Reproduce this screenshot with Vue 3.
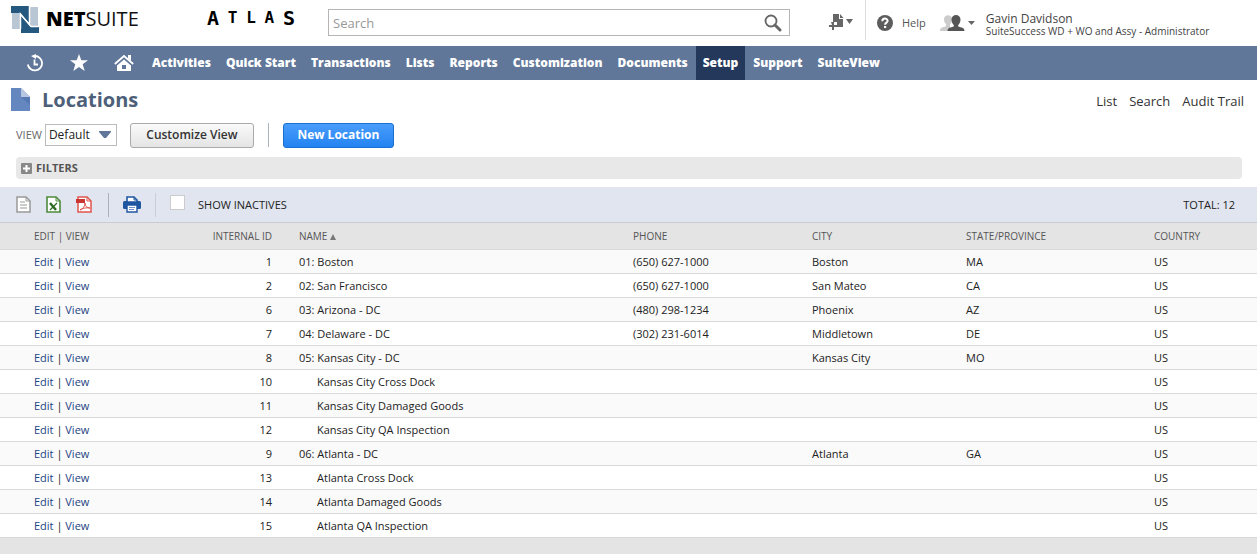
<script setup>
import { ref } from 'vue'

const query = ref('')
const view = ref('Default')
const showInactives = ref(false)
const atlas = ['A', 'T', 'L', 'A', 'S']
const menu = ['Activities', 'Quick Start', 'Transactions', 'Lists', 'Reports', 'Customization', 'Documents', 'Setup', 'Support', 'SuiteView']

const make = (id, name, child = false, phone = '', city = '', state = '') => ({ id, name, child, phone, city, state })
const rows = [
  make(1, '01: Boston', false, '(650) 627-1000', 'Boston', 'MA'),
  make(2, '02: San Francisco', false, '(650) 627-1000', 'San Mateo', 'CA'),
  make(6, '03: Arizona - DC', false, '(480) 298-1234', 'Phoenix', 'AZ'),
  make(7, '04: Delaware - DC', false, '(302) 231-6014', 'Middletown', 'DE'),
  make(8, '05: Kansas City - DC', false, '', 'Kansas City', 'MO'),
  make(10, 'Kansas City Cross Dock', true),
  make(11, 'Kansas City Damaged Goods', true),
  make(12, 'Kansas City QA Inspection', true),
  make(9, '06: Atlanta - DC', false, '', 'Atlanta', 'GA'),
  make(13, 'Atlanta Cross Dock', true),
  make(14, 'Atlanta Damaged Goods', true),
  make(15, 'Atlanta QA Inspection', true)
]
</script>

<template>
  <div class="page">
    <header class="top">
      <div class="brand">
        <svg class="mark" width="28" height="28" viewBox="0 0 28 28" aria-hidden="true">
          <path d="M1 7h8v16H1z" fill="#b9c6d3" />
          <path d="M19 1h8v20h-8z" fill="#b9c6d3" />
          <path d="M0 0h18v17L9 7H0z" fill="#24587f" />
          <path d="M10 10l10 11h8v6H10z" fill="#24587f" />
          <path d="M9.500 23V8L20 20.500h7.500M18.500 0v17" fill="none" stroke="#fff" stroke-width="1.500" />
        </svg>
        <span class="netsuite"><b>NET</b>SUITE</span>
        <span class="atlas"><span v-for="(c, i) in atlas" :key="i" :class="{ big: i === 0 || i === 4 }">{{ c }}</span></span>
      </div>
      <form class="search" @submit.prevent>
        <input v-model="query" type="text" placeholder="Search" aria-label="Search" />
        <button type="submit" aria-label="Run search">
          <svg width="18" height="18" viewBox="0 0 18 18"><circle cx="7" cy="7" r="5.500" fill="none" stroke="#666" stroke-width="1.800" /><path d="M11 11l5 5" stroke="#666" stroke-width="3" stroke-linecap="round" /></svg>
        </button>
      </form>
      <div class="tools">
        <button class="create" type="button" aria-label="Create new">
          <svg width="26" height="18" viewBox="0 0 26 18" fill="#666">
            <path d="M5 1h6v5h4v8H9V9H5z" /><path d="M12 1l3.500 4H12z" /><path d="M3 9h3v3h3v2H6v3H4v-3H1v-2h3z" /><path d="M18 6h7l-3.500 5z" />
          </svg>
        </button>
        <a class="help" href="#">
          <svg width="16" height="16" viewBox="0 0 16 16"><circle cx="8" cy="8" r="8" fill="#5c5c5c" /><path d="M5.300 6.200C5.300 2.700 10.800 2.800 10.600 6c-.1 1.700-2.500 1.700-2.500 3.700" fill="none" stroke="#fff" stroke-width="2" /><path d="M7 11h2.200v2H7z" fill="#fff" /></svg>
          <span>Help</span>
        </a>
        <button class="role" type="button" aria-label="Change role">
          <svg width="35" height="18" viewBox="0 0 35 18">
            <path d="M4 5c0-5 8-5 8 0 0 3-1 4-2 5v3l2 4H0c0-4 2-3 6-5v-2C4.500 9 4 7 4 5z" fill="#ccc" />
            <path d="M11.500 5.500c0-6 9-6 9 0 0 2.500-1 4.500-2.300 5.500v1.500c3 1 6.300 1 6.300 4.500H7.500c0-3.500 3.300-3.500 6.300-4.500V11c-1.300-1-2.300-3-2.300-5.500z" fill="#555" />
            <path d="M28 7h7l-3.500 4z" fill="#666" />
          </svg>
        </button>
        <div class="user"><span class="who">Gavin Davidson</span><span>SuiteSuccess WD + WO and Assy - Administrator</span></div>
      </div>
    </header>

    <nav class="nav">
      <a class="ico" href="#" aria-label="Recent records">
        <svg width="18" height="18" viewBox="0 0 18 18" fill="none" stroke="#fff" stroke-width="1.800"><path d="M9 2a7.200 7.200 0 1 1-7.200 8.500" /><path d="M8.500 5.500v5h3.500" /><path d="M5 2l5-2v5z" fill="#fff" stroke="none" /></svg>
      </a>
      <a class="ico" href="#" aria-label="Shortcuts">
        <svg width="18" height="18" viewBox="0 0 18 18" fill="#fff"><path d="M9 0l2.300 6.200H18l-5.300 4.100L14.700 17 9 13l-5.700 4 2-6.700L0 6.200h6.700z" /></svg>
      </a>
      <a class="ico home" href="#" aria-label="Home">
        <svg width="20" height="18" viewBox="0 0 20 18"><path d="M.8 10L10 2l9.200 8" fill="none" stroke="#fff" stroke-width="1.800" /><path d="M14 1h3v6l-3-2.500z" fill="#fff" /><path d="M10 5.500l7 6V17H3v-5.500zM8 11v4h4v-4z" fill="#fff" fill-rule="evenodd" /></svg>
      </a>
      <a v-for="m in menu" :key="m" href="#" :class="{ active: m === 'Setup' }">{{ m }}</a>
    </nav>

    <section class="heading">
      <svg width="19" height="24" viewBox="0 0 19 24"><path d="M0 0h10l9 9v14H0z" fill="#6487bf" /><path d="M10 0l9 9h-9z" fill="#b7c7e2" /><path d="M10 9h9v8z" fill="#5579b3" /></svg>
      <h1>Locations</h1>
      <div class="links"><a href="#">List</a><a href="#">Search</a><a href="#">Audit Trail</a></div>
    </section>

    <section class="controls">
      <label for="view">VIEW</label>
      <div class="select">
        <select id="view" v-model="view"><option>Default</option></select>
        <svg width="12" height="7" viewBox="0 0 12 7"><path d="M0 0h12v1L7 7H5L0 1z" fill="#607799" /></svg>
      </div>
      <button class="btn" type="button">Customize View</button>
      <span class="rule"></span>
      <button class="btn primary" type="button">New Location</button>
    </section>

    <button class="filters" type="button">
      <svg width="11" height="11" viewBox="0 0 11 11"><rect width="11" height="11" rx="1" fill="#888" /><path d="M5.500 2v7M2 5.500h7" stroke="#fff" stroke-width="2" /></svg>
      FILTERS
    </button>

    <section class="bar">
      <div class="exports">
        <button type="button" aria-label="Export CSV"><svg width="15" height="17" viewBox="0 0 15 17" fill="none" stroke="#999"><path d="M1 1h9l4 4v11H1z" fill="#fff" stroke-width="1.500" /><path d="M10 1v4h4M4 6h5M4 9h7M4 12h7" /></svg></button>
        <button type="button" aria-label="Export to Excel"><svg width="15" height="17" viewBox="0 0 15 17" fill="none" stroke="#4d8a3d"><path d="M1 1h9l4 4v11H1z" fill="#fff" stroke-width="1.600" /><path d="M10 1v4h4" /><path d="M4 7l6 7" stroke="#2e6b25" stroke-width="2.500" /><path d="M11 7l-7 7" stroke="#2e6b25" stroke-width="1.300" /></svg></button>
        <button type="button" aria-label="Export to PDF"><svg width="17" height="17" viewBox="0 0 17 17" fill="none" stroke="#e0544e"><path d="M2 1h9l4 4v11H2z" fill="#fff" stroke-width="1.500" /><path d="M11 1v4h4" /><path d="M0 3h9v4H0z" fill="#c93632" stroke="none" /><path d="M4 14c3-1 5-4 5-7 0 3 2 5 5 5-4-.5-7 0-10 2z" /></svg></button>
      </div>
      <span class="rule"></span>
      <button class="print" type="button" aria-label="Print"><svg width="18" height="17" viewBox="0 0 18 17"><rect y="5" width="18" height="8" rx="1.500" fill="#1f56a0" /><path d="M4 6V1h7l3 3v2z" fill="#fff" stroke="#1f56a0" stroke-width="1.600" /><path d="M11 1v3h3" fill="none" stroke="#1f56a0" /><path d="M4 9h10v7H4z" fill="#fff" stroke="#1f56a0" stroke-width="1.400" /><path d="M6 11.500h6M6 13.500h5" stroke="#6c92c5" /></svg></button>
      <span class="rule light"></span>
      <label class="inactive"><input v-model="showInactives" type="checkbox" /><span>SHOW INACTIVES</span></label>
      <span class="total">TOTAL: 12</span>
    </section>

    <table>
      <colgroup><col class="c-edit" /><col class="c-id" /><col /><col class="c-phone" /><col class="c-city" /><col class="c-state" /><col class="c-country" /></colgroup>
      <thead>
        <tr><th class="edit">EDIT | VIEW</th><th class="id">INTERNAL ID</th><th>NAME <svg width="6" height="6" viewBox="0 0 6 6"><path d="M3 0l3 6H0z" fill="#777" /></svg></th><th>PHONE</th><th>CITY</th><th>STATE/PROVINCE</th><th>COUNTRY</th></tr>
      </thead>
      <tbody>
        <tr v-for="r in rows" :key="r.id">
          <td class="edit"><a href="#">Edit</a> | <a href="#">View</a></td>
          <td class="id">{{ r.id }}</td>
          <td :class="{ child: r.child }">{{ r.name }}</td>
          <td>{{ r.phone }}</td>
          <td>{{ r.city }}</td>
          <td>{{ r.state }}</td>
          <td>US</td>
        </tr>
      </tbody>
    </table>
    <footer class="foot"></footer>
  </div>
</template>

<style>
body { margin: 0; }
</style>

<style scoped>
* { box-sizing: border-box; }
.page { min-height: 100vh; display: flex; flex-direction: column; background: #fff; color: #333; font: 11px/16px "Open Sans", "Noto Sans", sans-serif; }
a { color: inherit; text-decoration: none; }
button { border: 0; padding: 0; background: none; font: inherit; color: inherit; cursor: pointer; }
svg { display: block; flex: none; }

.top { display: flex; height: 46px; }
.brand { width: 328px; flex: none; display: flex; align-items: flex-start; padding: 6px 0 0 11px; }
.netsuite { width: 96px; margin-left: 7px; font-size: 20px; line-height: 26px; color: #111; white-space: nowrap; }
.netsuite b { font-weight: 800; color: #000; }
.atlas { display: flex; justify-content: space-between; align-items: center; width: 88px; height: 24px; margin-left: 65px; font: bold 16px/24px "DejaVu Sans Mono", monospace; color: #000; }
.atlas .big { font-size: 20px; }
.search { flex: 1; display: flex; align-items: center; height: 27px; margin-top: 9px; padding-right: 7px; border: 1px solid #b5b5b5; }
.search input { flex: 1; min-width: 0; border: 0; outline: 0; padding: 0 4px; background: none; font: 13px/20px "Open Sans", sans-serif; color: #333; }
.search input::placeholder { color: #999; opacity: 1; }
.tools { flex: none; width: 467px; display: flex; align-items: center; padding-left: 38px; }
.create { width: 38px; height: 40px; align-self: flex-start; border-right: 1px solid #ddd; padding-top: 3px; }
.help { display: flex; align-items: center; gap: 9px; margin-left: 11px; font-size: 11px; color: #555; }
.role { margin-left: 14px; }
.user { display: flex; flex-direction: column; margin: 4px 0 0 11px; font-size: 10px; line-height: 12px; color: #444; white-space: nowrap; }
.who { font-size: 12px; }

.nav { display: flex; align-items: center; gap: 1px; height: 34px; padding-left: 25px; background: #607799; color: #fff; font-size: 12px; font-weight: 800; }
.nav a { height: 34px; line-height: 33px; padding: 0 7px; white-space: nowrap; }
.nav .ico { width: 43px; padding: 8px 0 0 1px; }
.nav .home { width: 31px; }
.nav .active { background: #24385b; }

.heading { display: flex; align-items: center; height: 40px; padding: 0 13px 0 11px; }
.heading h1 { margin: 0 0 0 12px; font-size: 20px; line-height: 28px; font-weight: 700; color: #4d5f79; }
.links { display: flex; gap: 12px; margin-left: auto; padding-top: 2px; font-size: 13px; }
.controls { display: flex; align-items: center; height: 30px; padding-left: 16px; }
.controls label { color: #666; }
.select { position: relative; width: 72px; height: 22px; margin: 0 13px 0 3px; }
.select select { width: 100%; height: 100%; padding: 0 3px; appearance: none; border: 1px solid #bbb; border-radius: 0; background: #fff; font: 12px/18px "Open Sans", sans-serif; color: #222; }
.select svg { position: absolute; right: 6px; top: 7px; pointer-events: none; }
.btn { height: 25px; width: 124px; border: 1px solid #aaa; border-radius: 3px; background: linear-gradient(#fafafa, #e4e4e4); font-size: 12px; font-weight: 600; color: #333; white-space: nowrap; }
.rule { width: 1px; height: 24px; background: #a9b1bd; }
.controls .rule { margin: 0 14px; }
.primary { width: 111px; border-color: #1b6fd0; background: linear-gradient(#4a9dfb, #2383f2); color: #fff; font-weight: 700; }
.filters { display: flex; align-items: center; gap: 4px; height: 22px; margin: 7px 15px 8px 16px; padding: 0 5px; border-radius: 4px; background: #e8e8e8; color: #555; font-size: 11px; font-weight: 700; }

.bar { display: flex; align-items: center; height: 35px; padding: 0 22px 0 16px; background: #e0e5ef; color: #222; }
.exports { display: flex; gap: 15px; width: 92px; }
.bar .print { margin: 0 14px; }
.bar .light { background: #c9cfda; }
.inactive { display: flex; align-items: center; gap: 13px; margin-left: 14px; }
.inactive input { appearance: none; width: 15px; height: 15px; margin: 0 0 4px; border: 1px solid #ccc; background: #fff; }
.total { margin-left: auto; }

table { width: 100%; table-layout: fixed; border-collapse: separate; border-spacing: 0; }
.c-edit { width: 160px; }
.c-id { width: 112px; }
.c-phone { width: 179px; }
.c-city { width: 154px; }
.c-state { width: 188px; }
.c-country { width: 130px; }
th, td { padding: 0 0 0 27px; text-align: left; white-space: nowrap; font-weight: 400; }
th { height: 28px; background: #e4e4e4; border-top: 1px solid #c9cdd3; border-bottom: 1px solid #d9d9d9; font-size: 10px; color: #555; }
th svg { display: inline-block; }
td { height: 24px; border-bottom: 1px solid #d9d9d9; color: #222; }
tbody tr:nth-child(odd) { background: #fafafa; }
.edit { padding-left: 34px; }
td a { color: #1d4583; }
.id { padding-left: 0; text-align: right; }
.child { padding-left: 45px; }
.foot { flex: 1; min-height: 16px; background: #e4e4e4; }
</style>
